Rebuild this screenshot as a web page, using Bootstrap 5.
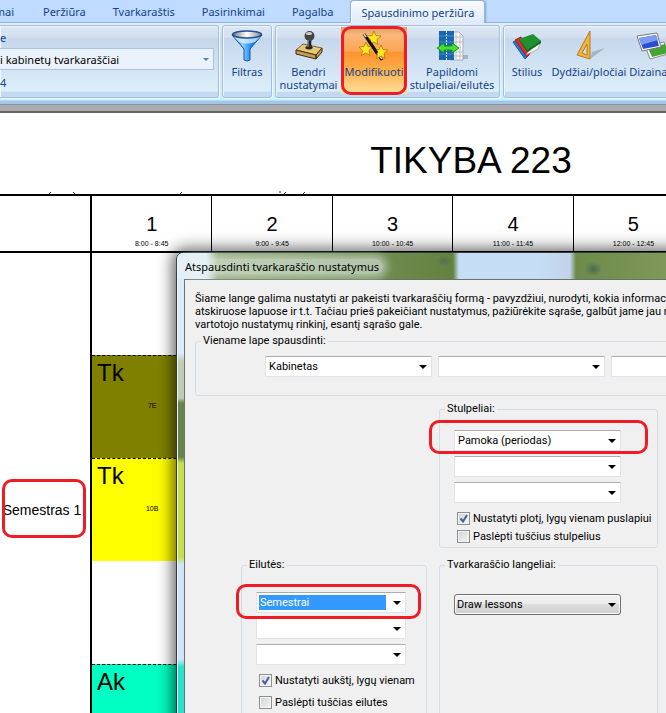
<!DOCTYPE html>
<html lang="lt">
<head>
<meta charset="utf-8">
<meta name="viewport" content="width=device-width, initial-scale=1">
<title>Tvarkaraštis – Spausdinimo peržiūra</title>
<link href="https://cdn.jsdelivr.net/npm/bootstrap@5.3.0/dist/css/bootstrap.min.css" rel="stylesheet">
<style>
:root{--ink:#15428b;--ring:#ee1c25}
body{font-family:"Noto Sans","Open Sans",sans-serif;font-size:11px;line-height:13px;background:#fff}
.app-shell{height:100vh;overflow:hidden}
.app-shell button{font:inherit;color:inherit;line-height:13px}
/* ribbon tabs */
.ribbon-tabs{background:#bfdbff;height:23px;gap:7px;color:var(--ink);border-bottom:1px solid #8db2e3;flex:none}
.ribbon-tabs button{border:0;background:none;padding:0 10px;white-space:nowrap}
.ribbon-tabs .cut-tab{width:14px;overflow:hidden;padding:0;display:flex;justify-content:flex-end;align-items:center}
.ribbon-tabs .cut-tab+button{margin-left:12px}
.ribbon-tabs .current-tab{border:1px solid #8db2e3;border-bottom:0;border-radius:4px 4px 0 0;background:linear-gradient(#f8fbff,#dfeaf7);height:23px;padding:0 10px;box-shadow:inset 1px 1px #fff,1px 0 2px #7fa6d8}
/* ribbon panel */
.ribbon-panel{height:78px;flex:none;padding:2px 0 2px;gap:3px;background:linear-gradient(#e4eef9,#c8d8ec 22%,#d9e8f7 75%,#c9f0ff);border-bottom:1px solid #a8e4fa;color:var(--ink)}
.rgroup{border:1px solid #a4bfde;border-radius:3px;background:linear-gradient(#dde7f4,#d3dfef 16%,#c6d7ec 17%,#dceefa 92%,#c3d9f0 93%);box-shadow:inset 1px 1px #edf5fd,1px 1px #eef8ff}
.rgroup button{border:0;background:none;padding:4px 0 0;text-align:center;white-space:nowrap;display:flex;flex-direction:column;align-items:center;gap:3px}
.rgroup svg{width:32px;height:32px;flex:none}
.rg-list{width:219px;border-left:0;border-radius:0 3px 3px 0;padding:5px 4px 0 0}
.rg-list select{appearance:none;width:100%;height:22px;border:1px solid #abc1de;border-left:0;padding:0;font:inherit;color:#000;background:#eaf2fb url("data:image/svg+xml,%3Csvg xmlns='http://www.w3.org/2000/svg' viewBox='0 0 6 3'%3E%3Cpath d='M0 0h6L3 3z' fill='%23567db1'/%3E%3C/svg%3E") no-repeat right 4px center/6px 3px;margin:4px 0 6px}
.w-filter{width:50px}.w-main{width:225px}.w-style{width:320px}
.b65{width:65px}.b66{width:66px}.b91{width:90px}.b48{width:46px}.b76{width:78px}
.rgroup .hot{position:relative;background:linear-gradient(#d8a068,#fbb77a 12%,#fda653 36%,#ff9232 38%,#fdb049 65%,#ffe0a0);margin:1px 0 3px;padding-top:3px}
.ring{position:absolute;border:3px solid var(--ring);border-radius:10px;pointer-events:none;z-index:3}
.hot .ring{inset:-1px 0}
.strip{height:12px;flex:none;background:linear-gradient(#a8c4e6 0 3px,#8496ad 3px 4px,#ababab 4px 10px,#646464 10px)}
/* printed sheet */
.desk{position:relative;overflow:hidden;min-height:0;font-family:"Liberation Sans",Arial,sans-serif;color:#000}
.sheet{width:942px}
.sheet-head{height:81px;padding-top:26px}
.sheet-head h1{font-size:37px;line-height:44px;font-weight:400;margin:0}
.sheet-head svg{display:block;width:340px;height:3px;margin-top:8px}
.timegrid{table-layout:fixed;border-collapse:separate;border-spacing:0;width:935px;border-top:2px solid #000;line-height:13px}
.timegrid .rowcol{width:92px}
.timegrid th{height:57px;border-bottom:2px solid #000;border-right:1px solid #000;font-weight:400;text-align:center;vertical-align:bottom;padding:0 0 2px}
.timegrid th:first-child,.timegrid .semester{border-right:2px solid #000}
.timegrid .num{display:block;font-size:20px;line-height:20px;margin-bottom:5px}
.timegrid .hours{display:block;font-size:7px;line-height:10px}
.timegrid .semester{position:relative;font-size:14px;line-height:16px;text-align:center;padding:0 6px 0 0;white-space:nowrap;vertical-align:middle}
.semester .ring{left:2px;right:4px;top:226px;height:59px}
.timegrid .slot{height:103px;padding:0;vertical-align:top}
.timegrid .slot-first{height:102px}
.timegrid .les{border-top:1px dashed #000}
.les b{display:block;font-weight:400;font-size:24px;line-height:28px;padding:3px 0 0 5px}
.les i{display:block;font-style:normal;font-size:7px;line-height:10px;text-align:center;margin-top:14px}
.olive{background:#808000}.yellow{background:#ff0}.mint{background:#00ffc3}
/* settings window */
.dlg{position:absolute;left:176px;top:139px;width:540px;min-height:520px;border:1px solid #303c38;border-radius:7px 0 0 0;padding-left:7px;box-shadow:0 0 16px 3px rgba(0,0,0,.65),inset 1px 1px #eef6fc;background:linear-gradient(#dcecfb 0 100px,#c1cdb3 108px 145px,#67844a 150px 204px,#c6df4a 210px 304px,#d0e5fb 312px 406px,#25e4cf 414px)}
.dlg-body,.dlg-body legend{font-family:Roboto,"Noto Sans",sans-serif;font-size:11px;line-height:13px;color:#000}
.dlg-bar{height:26px;margin-left:-6px;padding:6px 0 0 7px;font-family:"Noto Sans","Open Sans",sans-serif;line-height:15px;border-radius:6px 0 0 0;background:radial-gradient(9px 7px at 415px 16px,#4c6a52,transparent),radial-gradient(8px 6px at 266px 8px,#557050,transparent),linear-gradient(90deg,#e3effa 28px,#8fa671 40px,#77935a 150px,#658241 270px,#658241 275px,#c5def5 281px,#c5def5 360px,#c3d2ea 392px,#6d8b4b 398px,#88a062)}
.dlg-bar span{padding:0 4px 0 0;background:rgba(232,242,240,.55);box-shadow:0 0 8px 4px rgba(232,242,240,.55);border-radius:8px}
.dlg-body{background:#f0f0f0;border:1px solid #69716d;border-right:0;border-bottom:0;padding:12px 0 0 10px;min-height:494px}
.dlg-body p{margin:0 0 3px;white-space:nowrap}
.fs{border:1px solid #d2dde6;border-radius:3px;min-width:0}
.dlg-body legend{line-height:14px;padding:0 2px;margin:0 0 0 5px}
.fs-page{width:600px;padding:8px 0 18px}
.fs-page .lists{gap:6px;margin-left:69px}
.fs-page .cb{width:167px;flex:none}
.cols{display:grid;grid-template-columns:186px 219px;gap:10px 12px;padding:6px 0 0 46px;width:max-content}
.fs-cols{padding:14px 0 2px}
.stack{gap:5px;margin-left:14px;width:167px}
.fs-rows{padding:20px 0 60px}.fs-rows .stack{width:150px}
.fs-cells{padding:22px 0 0}
.cb{appearance:none;display:block;width:100%;height:21px;border:1px solid #e2e3ea;border-top-color:#abadb3;border-radius:1px;padding:0 20px 0 3px;font:inherit;color:#000;background:#fff url("data:image/svg+xml,%3Csvg xmlns='http://www.w3.org/2000/svg' viewBox='0 0 8 4'%3E%3Cpath d='M0 0h8L4 4z'/%3E%3C/svg%3E") no-repeat right 4px center/8px 4px}
.cb-picked{color:#fff;background-image:url("data:image/svg+xml,%3Csvg xmlns='http://www.w3.org/2000/svg' viewBox='0 0 8 4'%3E%3Cpath d='M0 0h8L4 4z'/%3E%3C/svg%3E"),linear-gradient(#3399ff,#3399ff);background-position:right 4px center,2px 2px;background-size:8px 4px,calc(100% - 21px) 15px;background-repeat:no-repeat}
.cb-button{border:1px solid #707070;border-radius:3px;padding-left:2px;background-color:transparent;box-shadow:inset 0 0 0 1px #fafafa}
.btnface{background:linear-gradient(#f2f2f2,#ebebeb 49%,#dcdcdc 50%,#cfcfcf);border-radius:3px}
.ring-cols{inset:-10px -27px -3px -25px}
.ring-rows{inset:-8px -15px -6px -20px}
.ticks{padding:6px 0 0 17px}
.ticks label{display:flex;align-items:center;gap:3px;height:18px;white-space:nowrap;overflow:hidden}
.ticks-wide{padding-top:4px}
.ticks-wide label{height:22px;width:157px}
.ticks input{appearance:none;margin:0;width:13px;height:13px;flex:none;border:1px solid #8e8f8f;background:linear-gradient(135deg,#cfd3d8,#f6f6f6);box-shadow:inset 0 0 0 1px #f4f4f4}
.ticks input:checked{background:url("data:image/svg+xml,%3Csvg xmlns='http://www.w3.org/2000/svg' viewBox='0 0 11 11'%3E%3Cpath d='M2.5 5.5 5 8.5 9 2' fill='none' stroke='%234b5f97' stroke-width='2'/%3E%3C/svg%3E") center/11px 11px,linear-gradient(135deg,#cfd3d8,#f6f6f6)}
</style>
<script src="https://cdn.jsdelivr.net/npm/bootstrap@5.3.0/dist/js/bootstrap.bundle.min.js"></script>
</head>
<body>
<div class="app-shell d-flex flex-column">
<nav class="ribbon-tabs d-flex align-items-stretch" aria-label="Meniu">
  <button class="cut-tab" type="button">mai</button>
  <button type="button">Peržiūra</button>
  <button type="button">Tvarkaraštis</button>
  <button type="button">Pasirinkimai</button>
  <button type="button">Pagalba</button>
  <button class="current-tab" type="button">Spausdinimo peržiūra</button>
</nav>
<div class="ribbon-panel d-flex overflow-hidden">
  <div class="rgroup rg-list flex-shrink-0">
    <label for="view" class="d-block">e</label>
    <select id="view"><option>i kabinetų tvarkaraščiai</option></select>
    <div>4</div>
  </div>
  <div class="rgroup w-filter flex-shrink-0 d-flex justify-content-center">
    <button type="button">
      <svg viewBox="0 0 32 32"><defs><linearGradient id="fa"><stop stop-color="#0a55c8"/><stop offset=".35" stop-color="#8fd2ff"/><stop offset=".6" stop-color="#2591fa"/><stop offset="1" stop-color="#0648b8"/></linearGradient><linearGradient id="fb"><stop stop-color="#777"/><stop offset=".5" stop-color="#fff"/><stop offset="1" stop-color="#888"/></linearGradient></defs><path d="M1 5 13 19v11q3 2 6 0V19L31 5z" fill="url(#fa)" stroke="#1a56a8"/><path d="M3 7 8 12q8 3 16 0l5-5z" fill="#e2f2ff" opacity=".75"/><ellipse cx="16" cy="4.500" rx="14.500" ry="3.500" fill="url(#fb)" stroke="#1c4f97" stroke-width="1.500"/></svg>
      <span>Filtras</span></button>
  </div>
  <div class="rgroup w-main flex-shrink-0 d-flex">
    <button class="b65" type="button">
      <svg viewBox="0 0 32 32"><path d="M3 20 10 14 29 18 23 25z" fill="#e6c57d" stroke="#80602a"/><path d="M3 20v4l20 5v-4zM23 25l6-7v4l-6 7z" fill="#c69c50" stroke="#3f2d10"/><path d="M14 8q2 7-2 10 4 3 8 0-3-3-1-10z" fill="#252525"/><circle cx="16.500" cy="6" r="5" fill="#444"/><ellipse cx="16" cy="3.500" rx="3" ry="1.500" fill="#ccc"/><path d="M15 10v7" stroke="#aaa"/></svg>
      <span>Bendri<br>nustatymai</span></button>
    <button class="b66 hot" type="button">
      <svg viewBox="0 0 32 32"><path d="M6 4 24 30" stroke="#111" stroke-width="3"/><path d="M6 4 8 7M18 21l6 8" stroke="#ddd" stroke-width="1.500"/><g fill="#ffe522" stroke="#a97900" stroke-width=".8"><path id="star" d="m16 1 2 4.500 5 .5-4 3.500 1 5-4-2.500-4.500 2.500 1-5L9 6l5-.5z"/><use href="#star" x="-8" y="11"/><use href="#star" x="7" y="14"/></g><path d="m11 11 8 12" stroke="#111" stroke-width="3"/></svg>
      <span>Modifikuoti</span><i class="ring"></i></button>
    <button class="b91" type="button">
      <svg viewBox="0 0 32 32"><path d="M14 2h9l4 4v24H14z" fill="#fafafa" stroke="#aab"/><path d="M15 7h12M15 12h12M15 22h12M15 26h12M20 3v26M24 3v26" stroke="#b7bfc8"/><path d="M27 25h5v4h-5z" fill="#8898aa" opacity=".6"/><path d="M3 1h15v29H3z" fill="#1c66ae"/><path d="M3 6h15M3 12h15M3 24h15" stroke="#3d8fd6"/><path d="M10.500 1v29" stroke="#d4e8ff" stroke-dasharray="2 1"/><path d="m1 18 7-5v3h8v-3l7 5-7 5v-3H8v3z" fill="#48df35" stroke="#169817"/></svg>
      <span>Papildomi<br>stulpeliai/eilutės</span></button>
  </div>
  <div class="rgroup w-style flex-shrink-0 d-flex">
    <button class="b48" type="button">
      <svg viewBox="0 0 32 32"><path d="m2 12 6-3 10 16-4 4z" fill="#1d78d8" stroke="#125aa8"/><path d="m4 10 6-3 10 15-4 5z" fill="#e02a2a" stroke="#b01818"/><path d="m15 25 12-6 2-6-12 9z" fill="#fff" stroke="#888" stroke-width=".5"/><path d="m8 10 14-5 8 6v2l-14 9z" fill="#0d6b1d"/><path d="m8 9 14-5 8 7-14 9z" fill="#1f9230"/></svg>
      <span>Stilius</span></button>
    <button class="b76" type="button">
      <svg viewBox="0 0 32 32"><path d="m17 29 15-11-13 4z" fill="#8394ab" opacity=".55"/><path fill-rule="evenodd" d="M17 1v28L4 25zm-3 13-5 9 5 2z" fill="#f2b33c" stroke="#b77a16"/></svg>
      <span>Dydžiai/pločiai</span></button>
    <button class="b48" type="button">
      <svg viewBox="0 0 32 32"><path d="m10 16 19-4 4 12-18 5z" fill="#fff" stroke="#888"/><path d="m13 18 17-4 3 9-16 4z" fill="#46a436"/><path d="m2 6 20-3 4 14-19 4z" fill="#fff" stroke="#777"/><path d="m4 8 17-3 3 11-16 3z" fill="#294fd0"/><path d="m4 8 17-3 2 5-17 5z" fill="#7b9df0"/></svg>
      <span>Dizainas</span></button>
  </div>
</div>
<div class="strip"></div>
<main class="desk flex-grow-1">
  <div class="sheet">
    <div class="sheet-head text-center"><h1>TIKYBA 223</h1>
      <svg viewBox="0 0 340 3" aria-hidden="true"><path d="m49 3 2-2M73 1l2 2M180 3l2-2M279 1h2M284 3l2-2M303 3l2-2" stroke="#234" fill="none"/></svg></div>
    <table class="timegrid">
      <colgroup><col class="rowcol"><col><col><col><col><col><col><col></colgroup>
      <thead><tr><th></th>
        <th><span class="num">1</span><span class="hours">8:00 - 8:45</span></th>
        <th><span class="num">2</span><span class="hours">9:00 - 9:45</span></th>
        <th><span class="num">3</span><span class="hours">10:00 - 10:45</span></th>
        <th><span class="num">4</span><span class="hours">11:00 - 11:45</span></th>
        <th><span class="num">5</span><span class="hours">12:00 - 12:45</span></th>
        <th></th><th></th></tr></thead>
      <tbody>
        <tr><td class="semester" rowspan="5">Semestras 1<i class="ring"></i></td><td class="slot slot-first"></td></tr>
        <tr><td class="slot les olive"><b>Tk</b><i>7E</i></td></tr>
        <tr><td class="slot les yellow"><b>Tk</b><i>10B</i></td></tr>
        <tr><td class="slot"></td></tr>
        <tr><td class="slot les mint"><b>Ak</b></td></tr>
      </tbody>
    </table>
  </div>
  <section class="dlg" role="dialog" aria-labelledby="dt">
    <div class="dlg-bar"><span id="dt">Atspausdinti tvarkaraščio nustatymus</span></div>
    <div class="dlg-body">
      <p>Šiame lange galima nustatyti ar pakeisti tvarkaraščių formą - pavyzdžiui, nurodyti, kokia informacija<br>atskiruose lapuose ir t.t. Tačiau prieš pakeičiant nustatymus, pažiūrėkite sąraše, galbūt jame jau ra<br>vartotojo nustatymų rinkinį, esantį sąrašo gale.</p>
      <fieldset class="fs fs-page">
        <legend class="float-none w-auto">Viename lape spausdinti:</legend>
        <div class="lists d-flex">
          <select class="cb" aria-label="Lapas 1"><option>Kabinetas</option></select>
          <select class="cb" aria-label="Lapas 2"><option></option></select>
          <select class="cb" aria-label="Lapas 3"><option></option></select>
        </div>
      </fieldset>
      <div class="cols">
        <div></div>
        <fieldset class="fs fs-cols">
          <legend class="float-none w-auto">Stulpeliai:</legend>
          <div class="stack d-flex flex-column">
            <div class="position-relative"><select class="cb" aria-label="Stulpelis 1"><option>Pamoka (periodas)</option></select><i class="ring ring-cols"></i></div>
            <select class="cb" aria-label="Stulpelis 2"><option></option></select>
            <select class="cb" aria-label="Stulpelis 3"><option></option></select>
          </div>
          <div class="ticks">
            <label><input type="checkbox" checked>Nustatyti plotį, lygų vienam puslapiui</label>
            <label><input type="checkbox">Paslėpti tuščius stulpelius</label>
          </div>
        </fieldset>
        <fieldset class="fs fs-rows">
          <legend class="float-none w-auto">Eilutės:</legend>
          <div class="stack d-flex flex-column">
            <div class="position-relative"><select class="cb cb-picked" aria-label="Eilutė 1"><option>Semestrai</option></select><i class="ring ring-rows"></i></div>
            <select class="cb" aria-label="Eilutė 2"><option></option></select>
            <select class="cb" aria-label="Eilutė 3"><option></option></select>
          </div>
          <div class="ticks ticks-wide">
            <label><input type="checkbox" checked>Nustatyti aukštį, lygų vienam</label>
            <label><input type="checkbox">Paslėpti tuščias eilutes</label>
          </div>
        </fieldset>
        <fieldset class="fs fs-cells">
          <legend class="float-none w-auto">Tvarkaraščio langeliai:</legend>
          <div class="stack btnface"><select class="cb cb-button" aria-label="Langeliai"><option>Draw lessons</option></select></div>
        </fieldset>
      </div>
    </div>
  </section>
</main>
</div>
</body>
</html>
